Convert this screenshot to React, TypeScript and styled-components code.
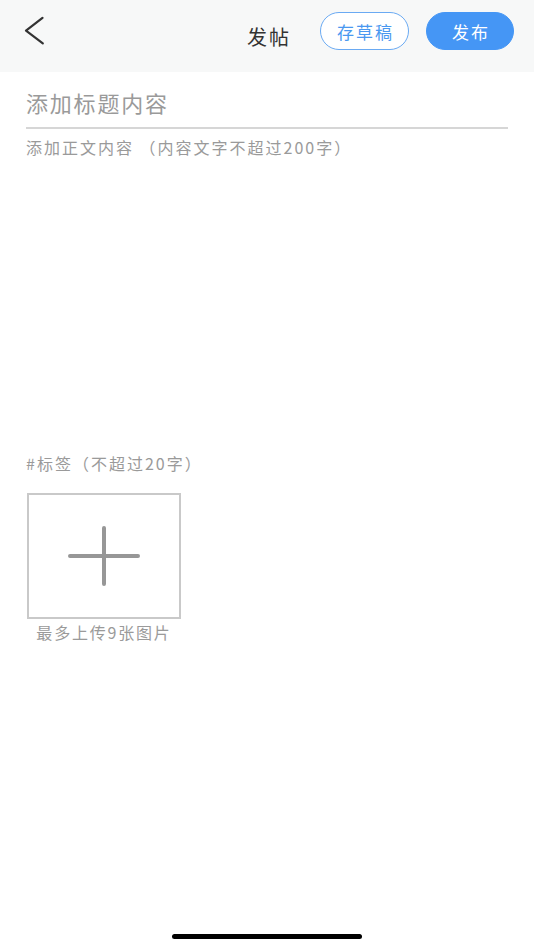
import { ReactElement } from 'react';
import styled, { createGlobalStyle } from 'styled-components';

const COLORS = {
	header: '#f7f8f8',
	text: '#333333',
	placeholder: '#9a9a9a',
	blue: '#4596f5',
	blueText: '#4a98f0',
	blueBorder: '#6aaaf3',
	line: '#d6d6d6',
	box: '#c9c9c9',
	plus: '#979797',
};

const GlobalStyle = createGlobalStyle`
	html, body {
		margin: 0;
		padding: 0;
		background: #ffffff;
	}
	body {
		font-family: "Noto Sans CJK SC", "Noto Sans", sans-serif;
		-webkit-font-smoothing: antialiased;
	}
`;

const BackIcon = (): ReactElement => (
	<svg width={20} height={30} viewBox="0 0 20 30" fill="none">
		<path
			d="M18.5 2.8 L2 15.6 L18.8 28.3"
			stroke={COLORS.text}
			strokeWidth={2.2}
			strokeLinecap="round"
			strokeLinejoin="round"
		/>
	</svg>
);

const PlusIcon = (): ReactElement => (
	<svg width={72} height={60} viewBox="0 0 72 60" fill="none">
		<path
			d="M2 30 H70 M36 2 V58"
			stroke={COLORS.plus}
			strokeWidth={4}
			strokeLinecap="round"
		/>
	</svg>
);

export default function App(): ReactElement {
	return (
		<>
			<GlobalStyle />
			<Page>
				<Header>
					<BackButton aria-label="返回">
						<BackIcon />
					</BackButton>
					<Title>发帖</Title>
					<Actions>
						<PillButton variant="outline">存草稿</PillButton>
						<PillButton variant="solid">发布</PillButton>
					</Actions>
				</Header>

				<Content>
					<TitleField>添加标题内容</TitleField>
					<Divider />
					<BodyField>添加正文内容 （内容文字不超过200字）</BodyField>
					<TagField>#标签（不超过20字）</TagField>
					<Uploader>
						<UploadBox>
							<PlusIcon />
						</UploadBox>
						<UploadHint>最多上传9张图片</UploadHint>
					</Uploader>
				</Content>

				<HomeIndicator />
			</Page>
		</>
	);
}

const Page = styled.div`
	width: 534px;
	min-height: 950px;
	display: flex;
	flex-direction: column;
	background: #ffffff;
`;

const Header = styled.header`
	height: 72px;
	box-sizing: border-box;
	display: grid;
	grid-template-columns: 1fr auto 1fr;
	align-items: start;
	padding: 12px 20px 0 24px;
	background: ${COLORS.header};
`;

const BackButton = styled.button`
	justify-self: start;
	display: flex;
	margin-top: 3px;
	padding: 0;
	border: none;
	background: transparent;
	cursor: pointer;
`;

const Title = styled.h1`
	margin: 15px 0 0;
	font-size: 20px;
	line-height: 20px;
	font-weight: 400;
	letter-spacing: 2px;
	color: ${COLORS.text};
`;

const Actions = styled.div`
	justify-self: end;
	display: flex;
	gap: 17px;
`;

const PillButton = styled.button<{ variant: 'outline' | 'solid' }>`
	width: ${({ variant }) => (variant === 'outline' ? 89 : 88)}px;
	height: 38px;
	box-sizing: border-box;
	border-radius: 19px;
	padding: 0 0 0 2px;
	font-family: inherit;
	font-size: 17px;
	letter-spacing: 2px;
	cursor: pointer;
	border: 1.5px solid
		${({ variant }) => (variant === 'outline' ? COLORS.blueBorder : COLORS.blue)};
	background: ${({ variant }) => (variant === 'outline' ? '#ffffff' : COLORS.blue)};
	color: ${({ variant }) => (variant === 'outline' ? COLORS.blueText : '#ffffff')};
`;

const Content = styled.main`
	display: flex;
	flex-direction: column;
	padding: 0 26px;
`;

const TitleField = styled.div`
	margin-top: 15px;
	font-size: 22px;
	line-height: 30px;
	letter-spacing: 1.8px;
	color: ${COLORS.placeholder};
`;

const Divider = styled.div`
	height: 2px;
	margin-top: 10px;
	background: ${COLORS.line};
`;

const BodyField = styled.div`
	margin-top: 6px;
	min-height: 316px;
	font-size: 16px;
	line-height: 24px;
	letter-spacing: 2px;
	color: ${COLORS.placeholder};
`;

const TagField = styled.div`
	font-size: 16px;
	line-height: 24px;
	letter-spacing: 2px;
	color: ${COLORS.placeholder};
`;

const Uploader = styled.div`
	display: flex;
	flex-direction: column;
	align-items: center;
	align-self: flex-start;
	margin: 18px 0 0 1px;
`;

const UploadBox = styled.div`
	width: 154px;
	height: 126px;
	box-sizing: border-box;
	border: 2px solid ${COLORS.box};
	display: flex;
	align-items: center;
	justify-content: center;
`;

const UploadHint = styled.div`
	margin-top: 2px;
	font-size: 16px;
	line-height: 22px;
	letter-spacing: 1.8px;
	color: ${COLORS.placeholder};
`;

const HomeIndicator = styled.div`
	margin: auto auto 11px;
	width: 190px;
	height: 5px;
	border-radius: 3px;
	background: #000000;
`;
